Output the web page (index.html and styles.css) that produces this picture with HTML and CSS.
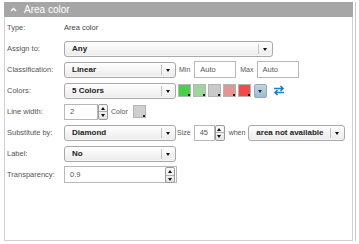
FILE: index.html
```html
<!DOCTYPE html>
<html lang="en">

<head>
    <meta charset="UTF-8">
    <title>Area color</title>
    <link rel="stylesheet" href="styles.css">
</head>

<body>
    <div class="panel">
        <div class="panel-head">
            <svg class="chev" width="7" height="5" viewBox="0 0 7 5"><polyline points="1,4 3.5,1.5 6,4" fill="none" stroke="#fff" stroke-width="1.4"/></svg>
            Area color
        </div>

        <div class="row row-type">
            <span class="lbl">Type:</span>
            <span class="val">Area color</span>
        </div>

        <div class="row">
            <span class="lbl">Assign to:</span>
            <div class="sel sel-wide"><span class="sel-text">Any</span><span class="arr"></span></div>
        </div>

        <div class="row">
            <span class="lbl">Classification:</span>
            <div class="sel"><span class="sel-text">Linear</span><span class="arr"></span></div>
            <span class="small min-lbl">Min</span>
            <div class="txt txt-auto">Auto</div>
            <span class="small max-lbl">Max</span>
            <div class="txt txt-auto">Auto</div>
        </div>

        <div class="row">
            <span class="lbl">Colors:</span>
            <div class="sel"><span class="sel-text">5 Colors</span><span class="arr"></span></div>
            <div class="swatches">
                <span class="sw sw-green"></span>
                <span class="sw sw-lgreen"></span>
                <span class="sw sw-gray"></span>
                <span class="sw sw-pink"></span>
                <span class="sw sw-red"></span>
                <span class="sw-drop"><span class="tri"></span></span>
                <svg class="swap" width="12" height="11" viewBox="0 0 12 11">
                    <path d="M1 3.5h9M7.5 1l2.5 2.5L7.5 6" fill="none" stroke="#1d7ec2" stroke-width="1.6"/>
                    <path d="M11 7.5H2M4.5 5L2 7.5 4.5 10" fill="none" stroke="#1d7ec2" stroke-width="1.6"/>
                </svg>
            </div>
        </div>

        <div class="row">
            <span class="lbl">Line width:</span>
            <div class="txt txt-line">2</div>
            <div class="spin"><span class="up"></span><span class="down"></span></div>
            <span class="small color-lbl">Color</span>
            <span class="sw sw-line"></span>
        </div>

        <div class="row">
            <span class="lbl">Substitute by:</span>
            <div class="sel"><span class="sel-text">Diamond</span><span class="arr"></span></div>
            <span class="small size-lbl">Size</span>
            <div class="txt txt-size">45</div>
            <div class="spin"><span class="up"></span><span class="down"></span></div>
            <span class="small when-lbl">when</span>
            <div class="sel sel-when"><span class="sel-text">area not available</span><span class="arr"></span></div>
        </div>

        <div class="row">
            <span class="lbl">Label:</span>
            <div class="sel"><span class="sel-text">No</span><span class="arr"></span></div>
        </div>

        <div class="row">
            <span class="lbl">Transparency:</span>
            <div class="txt txt-trans">0.9
                <div class="spin spin-in"><span class="up"></span><span class="down"></span></div>
            </div>
        </div>
    </div>
</body>

</html>
```

FILE: styles.css
```css
body {
    margin: 0;
    background: #fff;
    font-family: "Liberation Sans", Arial, sans-serif;
    font-size: 7.5px;
    color: #555;
}

.panel {
    margin: 2px 0 0 4px;
    width: 347px;
    height: 238px;
    border: 1px solid #d0d0d0;
    border-top: none;
    box-shadow: 2px 0 0 #fff, 3px 0 0 #c8c8c8;
}

.panel-head {
    height: 15px;
    margin: 0 -1px;
    background: #a6a6a6;
    color: #fff;
    font-size: 10px;
    line-height: 15px;
    display: flex;
    align-items: center;
    gap: 7px;
    padding-left: 6px;
}

.chev {
    margin-top: -1px;
}

.row {
    height: 21px;
    display: flex;
    align-items: center;
    padding-left: 2px;
}

.lbl {
    width: 57px;
    flex: none;
}

.val {
    color: #444;
}

.small {
    font-size: 7px;
    color: #555;
}

.sel {
    width: 110px;
    height: 14px;
    border: 1px solid #a9a9a9;
    border-radius: 3px;
    background: linear-gradient(#ffffff, #ebebeb);
    display: flex;
    align-items: center;
    box-shadow: inset 0 -1px 0 #f6f6f6;
}

.sel-wide {
    width: 207px;
}

.sel-when {
    width: 95px;
}

.sel-text {
    flex: 1;
    padding-left: 7px;
    font-size: 8px;
    font-weight: bold;
    color: #222;
}

.arr {
    width: 13px;
    height: 10px;
    border-left: 1px solid #c4c4c4;
    position: relative;
}

.arr::after {
    content: "";
    position: absolute;
    left: 4px;
    top: 4px;
    border-left: 2.5px solid transparent;
    border-right: 2.5px solid transparent;
    border-top: 3px solid #111;
}

.txt {
    height: 14px;
    border: 1px solid #b8b8b8;
    background: #fff;
    color: #555;
    font-size: 7.5px;
    line-height: 14px;
    padding-left: 5px;
    position: relative;
}

.txt-auto {
    width: 35px;
    height: 15px;
    line-height: 15px;
}

.min-lbl {
    margin: 0 4px 0 3px;
}

.max-lbl {
    margin: 0 3px 0 4px;
}

.txt-line {
    width: 27px;
}

.txt-size {
    width: 14px;
}

.txt-trans {
    width: 106px;
    height: 15px;
    line-height: 15px;
}

.spin {
    width: 8px;
    height: 14px;
    border: 1px solid #9a9a9a;
    border-radius: 2px;
    background: linear-gradient(#fbfbfb, #e4e4e4);
    display: flex;
    flex-direction: column;
}

.spin-in {
    position: absolute;
    right: 1px;
    top: 0;
}

.spin .up,
.spin .down {
    flex: 1;
    position: relative;
}

.spin .up {
    border-bottom: 1px solid #b0b0b0;
}

.spin .up::after,
.spin .down::after {
    content: "";
    position: absolute;
    left: 1.5px;
    top: 2px;
    border-left: 2.5px solid transparent;
    border-right: 2.5px solid transparent;
}

.spin .up::after {
    border-bottom: 3px solid #111;
}

.spin .down::after {
    border-top: 3px solid #111;
}

.color-lbl {
    margin: 0 5px 0 3px;
}

.size-lbl {
    margin: 0 3px 0 1px;
}

.when-lbl {
    margin: 0 3px 0 4px;
}

.swatches {
    display: flex;
    align-items: center;
    gap: 2px;
    margin-left: 2px;
}

.sw {
    width: 11px;
    height: 11px;
    border: 1px solid #b5b5b5;
    position: relative;
    display: inline-block;
}

.sw::after {
    content: "";
    position: absolute;
    right: 0;
    bottom: 0;
    width: 2px;
    height: 2px;
    background: #222;
}

.sw-green { background: #47d147; }
.sw-lgreen { background: #9ed49e; }
.sw-gray { background: #c9c9c9; }
.sw-pink { background: #e59494; }
.sw-red { background: #f24a4a; }

.sw-line {
    background: #cfcfcf;
}

.sw-drop {
    width: 11px;
    height: 12px;
    margin-left: 1px;
    border: 1px solid #8fa9bb;
    border-radius: 2px;
    background: linear-gradient(#c1d5e2, #9fbbcd);
    position: relative;
}

.sw-drop .tri {
    position: absolute;
    left: 3px;
    top: 5px;
    border-left: 2.5px solid transparent;
    border-right: 2.5px solid transparent;
    border-top: 3px solid #1e2c38;
}

.swap {
    margin-left: 4px;
}
```
